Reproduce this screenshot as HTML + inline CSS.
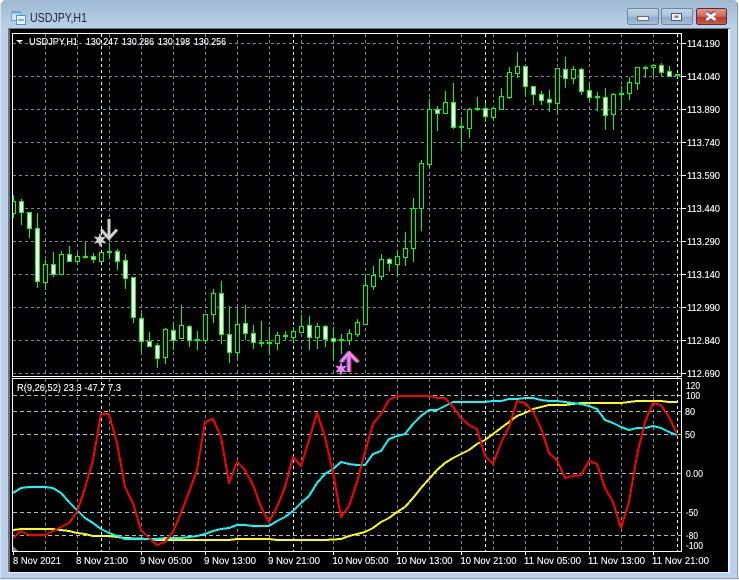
<!DOCTYPE html>
<html><head><meta charset="utf-8"><title>USDJPY,H1</title>
<style>
html,body{margin:0;padding:0;background:#b9d1ea;overflow:hidden}
svg{display:block;font-family:"Liberation Sans",sans-serif}
.l text{fill:#fff;stroke:#fff;stroke-width:.12;font-size:10.5px}
</style></head><body>
<svg width="739" height="580" viewBox="0 0 739 580" xmlns="http://www.w3.org/2000/svg">
<defs>
<linearGradient id="tb" x1="0" y1="0" x2="0" y2="1"><stop offset="0" stop-color="#9fb8d2"/><stop offset="1" stop-color="#bbd2e9"/></linearGradient>
<linearGradient id="bt" x1="0" y1="0" x2="0" y2="1"><stop offset="0" stop-color="#c3d6e8"/><stop offset=".5" stop-color="#a9c1d9"/><stop offset=".55" stop-color="#90abc8"/><stop offset="1" stop-color="#a5bfda"/></linearGradient>
<linearGradient id="cl" x1="0" y1="0" x2="0" y2="1"><stop offset="0" stop-color="#e39a8c"/><stop offset=".5" stop-color="#d0685a"/><stop offset=".55" stop-color="#b8392b"/><stop offset="1" stop-color="#c8604c"/></linearGradient>
<clipPath id="mc"><rect x="13" y="34" width="668" height="342"/></clipPath>
<clipPath id="sc"><rect x="13" y="379" width="668" height="172"/></clipPath>
</defs>
<rect width="739" height="580" fill="#b9d1ea"/>
<rect width="739" height="29" fill="url(#tb)"/>
<rect x="0" y="0" width="1" height="580" fill="#d9e3ec"/>
<rect x="737" y="0" width="1" height="580" fill="#8fa3b8"/>
<rect x="738" y="0" width="1" height="580" fill="#f0f0f0"/>
<rect x="0" y="578" width="739" height="1" fill="#8fa3b8"/>
<rect x="0" y="579" width="739" height="1" fill="#f0f0f0"/>
<path d="M0 0h4L0 4z" fill="#fff"/>
<path d="M735 0h4v4z" fill="#fff"/>

<!-- icon -->
<rect x="11.5" y="11.5" width="9" height="9" fill="#cfe3f5" stroke="#6aa5d8"/>
<rect x="11.5" y="11.5" width="9" height="2" fill="#6aa5d8"/>
<rect x="16.5" y="15.5" width="9" height="9" fill="#f4f9fd" stroke="#4f94cf"/>
<path d="M18 21l1.500-2 1.500 2 1.500-2 1.500 2" fill="none" stroke="#4f94cf"/>
<text x="30" y="22" font-size="12.5" fill="#1c2b3c" textLength="57" lengthAdjust="spacingAndGlyphs">USDJPY,H1</text>

<!-- buttons -->
<rect x="627.500" y="8.500" width="31" height="16" rx="2" fill="url(#bt)" stroke="#6f87a3"/>
<rect x="637.500" y="16.500" width="11" height="4" fill="#f2f2f2" stroke="#5f6f80"/>
<rect x="661.500" y="8.500" width="31" height="16" rx="2" fill="url(#bt)" stroke="#6f87a3"/>
<rect x="671.500" y="13.500" width="10" height="7" fill="#eef2f6" stroke="#4c5a6a"/>
<rect x="674.500" y="15.500" width="4" height="2.500" fill="#7a8ea3"/>
<rect x="696.500" y="8.500" width="30" height="16" rx="2" fill="url(#cl)" stroke="#5d2a33"/>
<path d="M706.500 12.500l4.500 3 4.500-3M706.500 20.500l4.500-3 4.500 3" fill="none" stroke="#6b3a3a" stroke-width="4"/>
<path d="M706.500 13l9 7M715.500 13l-9 7" stroke="#f5f5f5" stroke-width="3" fill="none"/>

<!-- client area -->
<rect x="8" y="28" width="722" height="545" fill="#6a7480"/>
<rect x="728" y="29" width="2" height="544" fill="#eef2f6"/>
<rect x="8" y="572" width="722" height="1" fill="#eef2f6"/>
<rect x="10" y="29" width="718" height="543" fill="#000"/>

<!-- main grid -->
<g fill="none" stroke="#778899" stroke-dasharray="3 3">
<path d="M13 43.500H681M13 76.500H681M13 109.500H681M13 142.500H681M13 175.500H681M13 208.500H681M13 241.500H681M13 274.500H681M13 307.500H681M13 340.500H681M13 373.500H681"/>
<path d="M45.500 34V376M77.500 34V376M109.500 34V376M141.500 34V376M173.500 34V376M205.500 34V376M237.500 34V376M269.500 34V376M301.500 34V376M333.500 34V376M365.500 34V376M397.500 34V376M429.500 34V376M461.500 34V376M493.500 34V376M525.500 34V376M557.500 34V376M589.500 34V376M621.500 34V376M653.500 34V376"/>
<path d="M45.500 379V551M77.500 379V551M109.500 379V551M141.500 379V551M173.500 379V551M205.500 379V551M237.500 379V551M269.500 379V551M301.500 379V551M333.500 379V551M365.500 379V551M397.500 379V551M429.500 379V551M461.500 379V551M493.500 379V551M525.500 379V551M557.500 379V551M589.500 379V551M621.500 379V551M653.500 379V551"/>
</g>
<path d="M13 395.500H681M13 411.500H681M13 434.500H681M13 473.500H681M13 512.500H681M13 535.500H681" fill="none" stroke="#b4bac0" stroke-dasharray="4 3"/>
<path d="M101.500 34V551M293.500 34V551M485.500 34V551M677.500 34V551" fill="none" stroke="#fff" stroke-dasharray="3 3"/>

<!-- candles -->
<g clip-path="url(#mc)" fill="none" stroke="#00ff00">
<path d="M13.500 195V218M21.500 199V225M29.500 212V238M37.500 213V288M45.500 260V290M53.500 252V277M61.500 251V274M69.500 246V261M77.500 253V265M85.500 242V258M93.500 253V263M101.500 252V261M109.500 243V259M117.500 249V270M125.500 254V289M133.500 277V323M141.500 313V353M149.500 332V347M157.500 343V368M165.500 328V364M173.500 322V350M181.500 305V338M189.500 325V347M197.500 331V350M205.500 314V344M213.500 289V323M221.500 281V344M229.500 306V363M237.500 308V360M245.500 305V340M253.500 325V349M261.500 321V347M269.500 327V355M277.500 332V350M285.500 331V340M293.500 327V342M301.500 315V332M309.500 316V350M317.500 323V349M325.500 325V347M333.500 327V360M341.500 334V354M349.500 329V345M357.500 319V337M365.500 274V324M373.500 266V290M381.500 254V280M389.500 258V271M397.500 250V277M405.500 232V266M413.500 198V262M421.500 160V231M429.500 99V168M437.500 106V131M445.500 91V113M453.500 83V129M461.500 117V148M469.500 108V138M477.500 97V111M485.500 103V122M493.500 107V120M501.500 88V110M509.500 67V99M517.500 52V78M525.500 66V96M533.500 86V105M541.500 91V105M549.500 90V112M557.500 68V114M565.500 57V88M573.500 66V84M581.500 68V95M589.500 82V102M597.500 92V111M605.500 88V130M613.500 93V130M621.500 86V110M629.500 77V100M637.500 67V90M645.500 66V78M653.500 65V76M661.500 63V76M669.500 66V76M677.500 74V78"/>
<path fill="#fff" d="M19.500 201.500h4v11h-4zM27.500 212.500h4v16h-4zM35.500 228.500h4v53h-4zM51.500 264.500h4v10h-4zM67.500 254.500h4v7h-4zM91.500 256.500h4v3h-4zM115.500 251.500h4v10h-4zM123.500 260.500h4v18h-4zM131.500 277.500h4v40h-4zM139.500 318.500h4v23h-4zM147.500 341.500h4v5h-4zM155.500 345.500h4v13h-4zM171.500 330.500h4v10h-4zM187.500 326.500h4v14h-4zM219.500 293.500h4v41h-4zM227.500 334.500h4v18h-4zM243.500 323.500h4v10h-4zM251.500 333.500h4v9h-4zM307.500 325.500h4v12h-4zM323.500 326.500h4v13h-4zM331.500 338.500h4v3h-4zM387.500 259.500h4v4h-4zM435.500 109.500h4v4h-4zM451.500 102.500h4v25h-4zM483.500 108.500h4v8h-4zM523.500 66.500h4v20h-4zM531.500 86.500h4v8h-4zM539.500 94.500h4v6h-4zM547.500 99.500h4v3h-4zM563.500 69.500h4v9h-4zM579.500 69.500h4v22h-4zM587.500 90.500h4v7h-4zM603.500 97.500h4v18h-4zM659.500 65.500h4v7h-4zM667.500 71.500h4v5h-4z"/>
<path fill="#000" d="M11.500 201.500h4v12h-4zM43.500 264.500h4v18h-4zM59.500 254.500h4v20h-4zM75.500 256.500h4v5h-4zM99.500 252.500h4v9h-4zM163.500 329.500h4v28h-4zM179.500 325.500h4v13h-4zM203.500 314.500h4v26h-4zM211.500 293.500h4v21h-4zM235.500 324.500h4v28h-4zM275.500 335.500h4v8h-4zM291.500 331.500h4v6h-4zM299.500 326.500h4v6h-4zM315.500 326.500h4v11h-4zM347.500 333.500h4v7h-4zM355.500 322.500h4v12h-4zM363.500 285.500h4v39h-4zM371.500 275.500h4v11h-4zM379.500 259.500h4v17h-4zM395.500 256.500h4v8h-4zM403.500 248.500h4v9h-4zM411.500 208.500h4v40h-4zM419.500 163.500h4v45h-4zM427.500 109.500h4v55h-4zM443.500 102.500h4v11h-4zM467.500 109.500h4v19h-4zM491.500 108.500h4v9h-4zM499.500 96.500h4v13h-4zM507.500 72.500h4v25h-4zM515.500 66.500h4v7h-4zM555.500 68.500h4v35h-4zM571.500 69.500h4v9h-4zM611.500 94.500h4v20h-4zM627.500 82.500h4v11h-4zM635.500 67.500h4v16h-4zM651.500 65.500h4v2h-4z"/>
<path stroke-width="2" d="M83 257h5M107 252h5M195 340h5M259 343h5M267 343h5M283 336h5M339 340h5M459 127h5M475 109h5M595 97h5M619 94h5M643 68h5M675 75h5"/>
</g>

<!-- signals -->
<path transform="translate(100 240)" fill="#d4d4d4" stroke="#8a94a0" stroke-width=".5" d="M0-7L1.500-2.600 6-3.500 3 0 6 3.500 1.500 2.600 0 7-1.500 2.600-6 3.500-3 0-6-3.500-1.500-2.600z"/>
<path d="M109 219V238M101 229.500L109 238.500L117 229.500" fill="none" stroke="#d0d0d0" stroke-width="3"/>
<path d="M350 372V353M342 362L350 353L359 362" fill="none" stroke="#e03050" stroke-width="3"/>
<path d="M348 372V353M340 362L348 353L357 362" fill="none" stroke="#6a6aff" stroke-width="3"/>
<path d="M349 372V353M341 362L349 352.500L358 362" fill="none" stroke="#e88ae8" stroke-width="2.500"/>
<path transform="translate(341 369)" fill="#ee82ee" d="M0-7L1.500-2.600 6-3.500 3 0 6 3.500 1.500 2.600 0 7-1.500 2.600-6 3.500-3 0-6-3.500-1.500-2.600z"/>

<!-- frames -->
<rect x="12.500" y="33.500" width="669" height="343" fill="none" stroke="#fff"/>
<rect x="12.500" y="378.500" width="669" height="173" fill="none" stroke="#fff"/>
<path d="M682 43.500h4M682 76.500h4M682 109.500h4M682 142.500h4M682 175.500h4M682 208.500h4M682 241.500h4M682 274.500h4M682 307.500h4M682 340.500h4M682 373.500h4M13.500 552v3M77.500 552v3M141.500 552v3M205.500 552v3M269.500 552v3M333.500 552v3M397.500 552v3M461.500 552v3M525.500 552v3M589.500 552v3M653.500 552v3" stroke="#fff" fill="none"/>

<!-- indicators -->
<g clip-path="url(#sc)" fill="none" stroke-width="2" stroke-linejoin="round" shape-rendering="crispEdges">
<path d="M13 530L21 529L53 529L61 530L69 531L77 533L85 534L93 536L109 536L117 537L125 538L149 539L157 540L229 540L237 539L269 539L277 540L325 540L341 539L349 536L357 534L365 532L373 528L381 522L389 518L397 512L405 507L413 498L421 488L429 479L437 470L445 463L453 458L461 454L469 450L477 444L485 440L493 434L501 428L509 422L517 416L525 413L533 409L541 407L549 405L565 405L573 404L581 403L621 403L629 402L637 401L661 401L669 402L677 402" stroke="#ffff00"/>
<path d="M13 493L21 488L29 487L45 487L53 488L61 493L69 502L77 510L85 518L93 523L101 529L109 533L117 536L125 539L149 539L157 539L165 538L181 538L189 537L197 536L205 534L213 531L221 529L229 528L237 525L245 525L253 526L269 526L277 521L285 517L293 511L301 503L309 496L317 483L325 474L333 469L341 462L349 464L357 465L365 465L373 454L381 451L389 439L397 436L405 434L413 424L421 416L429 410L437 410L445 406L453 402L485 402L493 401L501 401L509 399L517 399L525 398L533 398L541 400L549 401L557 401L565 402L573 403L581 404L589 406L597 409L605 420L613 423L621 427L629 430L637 428L645 428L653 426L661 428L669 432L677 435" stroke="#00ffff"/>
<path d="M13 538L21 531L29 535L45 535L53 531L61 527L69 523L77 512L85 488L93 460L101 414L109 414L117 443L125 487L133 503L141 530L149 538L157 545L165 542L173 532L181 513L189 492L197 470L205 422L213 419L221 437L229 483L237 462L245 470L253 485L261 507L269 522L277 507L285 487L293 457L301 466L309 440L317 413L325 437L333 472L341 517L349 506L357 482L365 452L373 424L381 414L389 400L397 396L429 396L437 398L445 398L453 407L461 418L469 425L477 429L485 456L493 464L501 443L509 427L517 401L525 403L533 412L541 428L549 453L557 460L565 478L573 476L581 475L589 461L597 464L605 488L613 502L621 528L629 502L637 455L645 422L653 403L661 405L669 417L677 434" stroke="#ff0000"/>
</g>
<path d="M13 546L18 551H13z" fill="#778899"/>

<!-- legends -->
<path d="M16 40h7l-3.500 3z" fill="#fff"/>
<g class="l">
<text x="29" y="45" textLength="49" lengthAdjust="spacingAndGlyphs">USDJPY,H1</text>
<text x="86" y="45" textLength="32" lengthAdjust="spacingAndGlyphs">130.247</text>
<text x="122" y="45" textLength="32" lengthAdjust="spacingAndGlyphs">130.286</text>
<text x="158" y="45" textLength="32" lengthAdjust="spacingAndGlyphs">130.198</text>
<text x="194" y="45" textLength="32" lengthAdjust="spacingAndGlyphs">130.256</text>
<text x="17" y="391" textLength="104" lengthAdjust="spacingAndGlyphs">R(9,26,52) 23.3 -47.7 7.3</text>

<text x="687" y="47" textLength="33" lengthAdjust="spacingAndGlyphs">114.190</text>
<text x="687" y="80" textLength="33" lengthAdjust="spacingAndGlyphs">114.040</text>
<text x="687" y="113" textLength="33" lengthAdjust="spacingAndGlyphs">113.890</text>
<text x="687" y="146" textLength="33" lengthAdjust="spacingAndGlyphs">113.740</text>
<text x="687" y="179" textLength="33" lengthAdjust="spacingAndGlyphs">113.590</text>
<text x="687" y="212" textLength="33" lengthAdjust="spacingAndGlyphs">113.440</text>
<text x="687" y="245" textLength="33" lengthAdjust="spacingAndGlyphs">113.290</text>
<text x="687" y="278" textLength="33" lengthAdjust="spacingAndGlyphs">113.140</text>
<text x="687" y="311" textLength="33" lengthAdjust="spacingAndGlyphs">112.990</text>
<text x="687" y="344" textLength="33" lengthAdjust="spacingAndGlyphs">112.840</text>
<text x="687" y="377" textLength="33" lengthAdjust="spacingAndGlyphs">112.690</text>

<text x="686" y="389" textLength="14" lengthAdjust="spacingAndGlyphs">120</text>
<text x="686" y="399" textLength="14" lengthAdjust="spacingAndGlyphs">100</text>
<text x="685" y="415" textLength="10" lengthAdjust="spacingAndGlyphs">80</text>
<text x="685" y="438" textLength="10" lengthAdjust="spacingAndGlyphs">50</text>
<text x="686" y="477" textLength="17" lengthAdjust="spacingAndGlyphs">0.00</text>
<text x="686" y="516" textLength="12" lengthAdjust="spacingAndGlyphs">-50</text>
<text x="686" y="539" textLength="12" lengthAdjust="spacingAndGlyphs">-80</text>
<text x="686" y="549" textLength="17" lengthAdjust="spacingAndGlyphs">-100</text>

<text x="13" y="564" textLength="48" lengthAdjust="spacingAndGlyphs">8 Nov 2021</text>
<text x="76" y="564" textLength="52" lengthAdjust="spacingAndGlyphs">8 Nov 21:00</text>
<text x="140" y="564" textLength="52" lengthAdjust="spacingAndGlyphs">9 Nov 05:00</text>
<text x="204" y="564" textLength="52" lengthAdjust="spacingAndGlyphs">9 Nov 13:00</text>
<text x="268" y="564" textLength="52" lengthAdjust="spacingAndGlyphs">9 Nov 21:00</text>
<text x="332.500" y="564" textLength="56" lengthAdjust="spacingAndGlyphs">10 Nov 05:00</text>
<text x="396.500" y="564" textLength="56" lengthAdjust="spacingAndGlyphs">10 Nov 13:00</text>
<text x="460.500" y="564" textLength="56" lengthAdjust="spacingAndGlyphs">10 Nov 21:00</text>
<text x="524" y="564" textLength="57" lengthAdjust="spacingAndGlyphs">11 Nov 05:00</text>
<text x="588" y="564" textLength="57" lengthAdjust="spacingAndGlyphs">11 Nov 13:00</text>
<text x="652" y="564" textLength="57" lengthAdjust="spacingAndGlyphs">11 Nov 21:00</text>
</g>
</svg>
</body></html>
